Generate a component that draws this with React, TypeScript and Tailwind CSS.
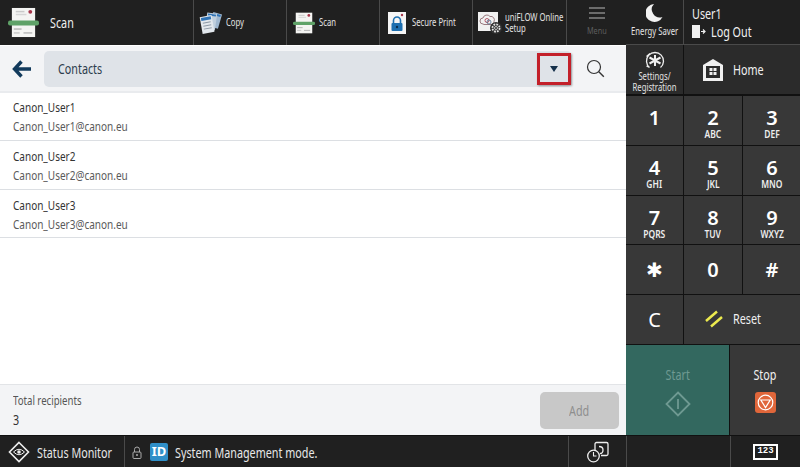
import React from 'react';

// the device font is a narrow one, none is installed, so squeeze Noto Sans
const T = ({ children, center, className = '' }: { children: React.ReactNode; center?: boolean; className?: string }) => (
  <span className={`inline-block whitespace-nowrap scale-x-[0.77] ${center ? 'origin-center text-center' : 'origin-left'} ${className}`}>
    {children}
  </span>
);

const ScanIcon = ({ size }: { size: number }) => (
  <svg width={size} height={size} viewBox="0 0 32 32" className="shrink-0">
    <rect x="4" y="1" width="24" height="30" fill="#f4f4f2" />
    <rect x="8" y="4" width="9" height="1.500" fill="#c9c9c9" />
    <rect x="8" y="7" width="11" height="1.500" fill="#d6d6d6" />
    <circle cx="23" cy="5" r="2" fill="#a5354a" />
    <rect x="0" y="14" width="32" height="5" rx="2" fill="#5fa268" />
    <rect x="6" y="22" width="8" height="1.500" fill="#b8b8b8" />
    <rect x="16" y="26" width="9" height="1.500" fill="#b8b8b8" />
    <rect x="6" y="26" width="6" height="1.500" fill="#c9c9c9" />
  </svg>
);

const CopyIcon = () => (
  <svg width="24" height="24" viewBox="0 0 24 24">
    <g transform="rotate(16 17 10)">
      <rect x="12" y="2" width="9" height="15" fill="#9fb7cf" />
      <rect x="13" y="3" width="7" height="2" fill="#2f73b5" />
    </g>
    <g transform="rotate(8 12 11)">
      <rect x="7" y="2" width="10" height="17" fill="#c0cfdd" />
      <rect x="8" y="3" width="8" height="2" fill="#2f73b5" />
    </g>
    <g transform="rotate(-10 8 13)">
      <rect x="2" y="5" width="12" height="17" fill="#e3e8ed" />
      <rect x="3" y="6" width="10" height="3" fill="#2f73b5" />
      <rect x="4" y="11" width="8" height="1" fill="#8d99a5" />
      <rect x="4" y="14" width="8" height="1" fill="#8d99a5" />
      <rect x="4" y="17" width="8" height="1" fill="#8d99a5" />
    </g>
  </svg>
);

const SecureIcon = () => (
  <svg width="18" height="22" viewBox="0 0 18 22">
    <rect width="18" height="22" fill="#f5f5f5" />
    <circle cx="14" cy="3" r="1.200" fill="#a5354a" />
    <path d="M5.500 11V8.500a3.500 3.500 0 0 1 7 0V11" fill="none" stroke="#1d6fb0" strokeWidth="1.600" />
    <rect x="3.500" y="11" width="11" height="8" rx="1" fill="#1d6fb0" />
    <circle cx="9" cy="15" r="1.200" fill="#0c2c4c" />
  </svg>
);

const UniflowIcon = () => (
  <svg width="24" height="24" viewBox="0 0 24 24">
    <rect x="0" y="1" width="20" height="19" fill="#f1f1f1" />
    <path d="M5 13a3 3 0 0 1 0-6 4 4 0 0 1 7-1.500a3.500 3.500 0 0 1 4 5 2.500 2.500 0 0 1-2 3H6z" fill="none" stroke="#9a7a80" strokeWidth="1" />
    <circle cx="9" cy="9.500" r="2" fill="none" stroke="#a5354a" strokeWidth="0.800" />
    <circle cx="11" cy="11" r="2" fill="none" stroke="#4a6a8a" strokeWidth="0.800" />
    <circle cx="18" cy="17" r="6" fill="#303030" />
    <circle cx="18" cy="17" r="3.600" fill="none" stroke="#e2e2e2" strokeWidth="1.800" strokeDasharray="1.800 1" />
    <circle cx="18" cy="17" r="1.500" fill="none" stroke="#e2e2e2" strokeWidth="0.800" />
  </svg>
);

const TopItem = ({ icon, label, width }: { icon: React.ReactNode; label: React.ReactNode; width: string }) => (
  <div className={`${width} flex h-full items-center border-r border-[#4a4a4a] pl-[1px]`}>
    <div className="flex w-[31px] shrink-0 items-center justify-center">{icon}</div>
    <T className="text-[10px] leading-[11px] text-[#e4e4e4]">{label}</T>
  </div>
);

const Contact = ({ name, offset = '' }: { name: string; offset?: string }) => (
  <div className={`flex h-[48.340px] flex-col justify-center border-b border-[#dcdfe3] pl-[13px] ${offset}`}>
    <div className="h-[19px] text-[13px] leading-[19px] text-[#333]"><T>{name}</T></div>
    <div className="h-[18px] text-[13px] leading-[18px] text-[#5a5a5a]"><T>{name}@canon.eu</T></div>
  </div>
);

const Key = ({ digit, letters, className = '' }: { digit: React.ReactNode; letters?: string; className?: string }) => (
  <div className={`flex flex-col items-center bg-[#383838] text-white ${letters ? 'justify-start pt-[11px]' : 'justify-center'} ${className}`}>
    <div className="h-[21px] text-[20px] font-semibold leading-[21px]">{digit}</div>
    {letters && <T center className="text-[11px] font-semibold leading-[11px] text-[#eee]">{letters}</T>}
  </div>
);

export default function App() {
  return (
    <div className="flex h-[467px] w-[800px] flex-col overflow-hidden bg-[#111] font-['Noto_Sans',sans-serif]">
      <div className="flex min-h-0 flex-1">
        {/* left side */}
        <div className="flex w-[626px] flex-col">
          <div className="flex h-[45px] bg-[#202020]">
            <div className="flex w-[194px] items-center border-r border-[#4a4a4a] pl-[8px]">
              <ScanIcon size={31} />
              <T className="ml-[11px] text-[14px] text-[#f0f0f0]">Scan</T>
            </div>
            <TopItem width="w-[93px]" icon={<CopyIcon />} label="Copy" />
            <TopItem width="w-[93px]" icon={<ScanIcon size={22} />} label="Scan" />
            <TopItem width="w-[93px]" icon={<SecureIcon />} label="Secure Print" />
            <TopItem width="w-[94px]" icon={<UniflowIcon />} label={<>uniFLOW Online<br />Setup</>} />
            <div className="flex flex-1 flex-col items-center pt-[7px] text-[#5e5e5e]">
              <div className="flex w-[16px] flex-col gap-[3px]">
                <div className="h-[2px] bg-[#6c6c6c]" />
                <div className="h-[2px] bg-[#6c6c6c]" />
                <div className="h-[2px] bg-[#6c6c6c]" />
              </div>
              <T center className="mt-[6px] text-[9.500px] leading-[11px]">Menu</T>
            </div>
          </div>

          <div className="flex h-[48px] items-center border-b-[2px] border-t border-b-[#e9ebee] border-t-[#fff] bg-[#f3f4f6]">
            <div className="flex w-[44px] justify-center">
              <svg width="20" height="18" viewBox="0 0 20 18">
                <path d="M9.500 1.500 2.500 9l7 7.500M3 9h16" fill="none" stroke="#123a5c" strokeWidth="3.400" />
              </svg>
            </div>
            <div className="flex h-[36px] w-[528px] items-center rounded-[5px] bg-[#dfe3e8] pl-[14px]">
              <T className="text-[14px] text-[#2c3c4c]">Contacts</T>
              <div className="ml-auto mr-[1px] flex h-[32px] w-[34px] items-center justify-center border-[3px] border-[#c3202a] shadow-[1px_1px_2px_rgba(0,0,0,0.35)]">
                <svg width="8" height="6" viewBox="0 0 8 6">
                  <path d="M0 0h8L4 6z" fill="#15304a" />
                </svg>
              </div>
            </div>
            <div className="flex flex-1 justify-center pr-[8px]">
              <svg width="19" height="19" viewBox="0 0 19 19">
                <circle cx="8" cy="8" r="6.500" fill="none" stroke="#333" strokeWidth="1.200" />
                <path d="m12.800 12.800 5 5" stroke="#333" strokeWidth="1.400" />
              </svg>
            </div>
          </div>

          <div className="flex-1 bg-white">
            <Contact name="Canon_User1" />
            <Contact name="Canon_User2" offset="pt-[1px]" />
            <Contact name="Canon_User3" offset="pt-[2px]" />
          </div>

          <div className="flex h-[51px] items-center justify-between border-t border-[#e2e4e7] bg-[#f3f4f6] pl-[13px] pr-[7px]">
            <div className="pt-[2px] text-[#555]">
              <div className="h-[16px] text-[12.500px] leading-[16px]"><T>Total recipients</T></div>
              <div className="mt-[2px] text-[14px] leading-[18px] text-[#333]"><T>3</T></div>
            </div>
            <div className="flex h-[37px] w-[79px] items-center justify-center rounded-[5px] bg-[#c8c8c8] text-[14px] text-[#8e8e8e]">
              <T center>Add</T>
            </div>
          </div>
        </div>

        {/* right panel */}
        <div className="flex w-[174px] flex-col bg-[#111]">
          <div className="flex h-[45px] gap-px border-b border-[#4a4a4a] bg-[#4a4a4a]">
            <div className="flex w-[57px] flex-col items-center bg-[#202020] pt-[3px]">
              <svg width="17" height="20" viewBox="0 0 17 20">
                <path d="M8 1a9 9 0 1 0 8.500 13A8 8 0 0 1 8 1z" fill="#f2f2f2" />
              </svg>
              <T center className="mt-[3px] text-[10px] leading-[11px] text-[#e4e4e4]">Energy Saver</T>
            </div>
            <div className="flex-1 bg-[#202020] pl-[8px] pt-[5px] text-[14px] text-[#f0f0f0]">
              <div className="h-[17px] leading-[17px]"><T>User1</T></div>
              <div className="mt-[1px] flex items-center gap-[5px] leading-[17px]">
                <svg width="14" height="13" viewBox="0 0 14 13" className="shrink-0">
                  <path d="M0 0h8v13H0z" fill="#f0f0f0" />
                  <path d="M9 6.500h3.500M11 4.500l2 2-2 2" fill="none" stroke="#f0f0f0" strokeWidth="1.200" />
                </svg>
                <T>Log Out</T>
              </div>
            </div>
          </div>
          <div className="flex h-[51px] gap-px border-b-[2px] border-[#111] bg-[#111]">
            <div className="flex w-[57px] flex-col items-center bg-[#2b2b2b] pt-[6px]">
              <svg width="24" height="19" viewBox="0 0 24 19">
                <path d="M6.500 16.500a8.500 8.500 0 1 1 11 0M6.500 16.500 3.500 15M3.500 5.500 7 2.500" fill="none" stroke="#f0f0f0" strokeWidth="1.300" />
                <path d="M12 4v11M6.500 6.500l11 6M17.500 6.500l-11 6" stroke="#f0f0f0" strokeWidth="2" />
              </svg>
              <T center className="mt-[1px] text-[10px] leading-[11px] text-[#e4e4e4]">Settings/<br />Registration</T>
            </div>
            <div className="flex flex-1 items-center gap-[10px] bg-[#2b2b2b] pl-[19px] text-[14px] text-[#f0f0f0]">
              <svg width="20" height="22" viewBox="0 0 20 22" className="shrink-0">
                <path d="M0 6 10 0l10 6v16H0z" fill="#f0f0f0" />
                <rect x="3" y="7" width="14" height="12" fill="#2b2b2b" />
                <path d="M6.500 9h3v3h-3zM10.500 9h3v3h-3zM6.500 13h3v3h-3zM10.500 13h3v3h-3z" fill="#f0f0f0" />
              </svg>
              <T>Home</T>
            </div>
          </div>

          <div className="grid h-[248px] grid-cols-[57px_58px_58px] grid-rows-5 gap-px">
            <Key digit="1" className="pb-[6px]" />
            <Key digit="2" letters="ABC" />
            <Key digit="3" letters="DEF" />
            <Key digit="4" letters="GHI" />
            <Key digit="5" letters="JKL" />
            <Key digit="6" letters="MNO" />
            <Key digit="7" letters="PQRS" />
            <Key digit="8" letters="TUV" />
            <Key digit="9" letters="WXYZ" />
            <Key digit={<span className="font-['DejaVu_Sans',sans-serif] font-normal">✱</span>} />
            <Key digit="0" />
            <Key digit="#" />
            <Key digit={<span className="font-normal">C</span>} />
            <div className="col-span-2 flex items-center gap-[10px] bg-[#383838] pb-[2px] pl-[21px] text-[14px] text-[#f0f0f0]">
              <svg width="18" height="18" viewBox="0 0 18 18" className="shrink-0">
                <path d="M1 11 12 1.500M6 16.500 17 7" stroke="#ecea4e" strokeWidth="2.500" />
              </svg>
              <T>Reset</T>
            </div>
          </div>

          <div className="flex flex-1 gap-px pt-px">
            <div className="flex w-[103px] flex-col items-center bg-[#33685f] pt-[20px] text-[14px] leading-[20px] text-[#6f9a92]">
              <T center>Start</T>
              <svg className="mt-[6px]" width="26" height="26" viewBox="0 0 26 26">
                <path d="M13 1.500 24.500 13 13 24.500 1.500 13z" fill="none" stroke="#6f9a92" strokeWidth="1.800" />
                <path d="M13 8v10" stroke="#6f9a92" strokeWidth="1.800" />
              </svg>
            </div>
            <div className="flex flex-1 flex-col items-center bg-[#383838] pt-[20px] text-[14px] leading-[20px] text-[#f0f0f0]">
              <T center>Stop</T>
              <div className="mt-[7px] flex h-[21px] w-[21px] items-center justify-center rounded-[3px] bg-[#e0663a]">
                <svg width="17" height="17" viewBox="0 0 17 17">
                  <circle cx="8.500" cy="8.500" r="7.300" fill="none" stroke="#fff" strokeWidth="1.200" />
                  <path d="M3.800 6h9.400l-4.700 7.500z" fill="none" stroke="#fff" strokeWidth="1.200" />
                </svg>
              </div>
            </div>
          </div>
        </div>
      </div>

      {/* status bar */}
      <div className="mt-px flex h-[31px] bg-[#202020] text-[14px] text-[#e8e8e8]">
        <div className="flex w-[125px] shrink-0 items-center overflow-hidden border-r border-[#4a4a4a] pl-[8px] pt-[1px]">
          <svg width="22" height="22" viewBox="0 0 22 22" className="shrink-0">
            <path d="M11 1.500 20.500 11 11 20.500 1.500 11z" fill="none" stroke="#eee" strokeWidth="1.600" />
            <path d="M5.500 11Q11 5.500 16.500 11 11 16.500 5.500 11z" fill="none" stroke="#eee" strokeWidth="1" />
            <circle cx="11" cy="11" r="1.800" fill="#eee" />
          </svg>
          <T className="ml-[7px]">Status Monitor</T>
        </div>
        <div className="flex w-[444px] shrink-0 items-center border-r border-[#4a4a4a] pl-[7px] pt-[1px]">
          <svg width="10" height="13" viewBox="0 0 10 13" className="shrink-0">
            <path d="M2.500 6V3.500a2.500 2.500 0 0 1 5 0V6" fill="none" stroke="#aaa" strokeWidth="1" />
            <rect x="1" y="6" width="8" height="6.500" rx="1" fill="none" stroke="#aaa" />
            <circle cx="5" cy="9" r="1" fill="#aaa" />
          </svg>
          <div className="ml-[8px] flex h-[18px] w-[18px] items-center justify-center rounded-[2px] bg-[#2f8fc8] text-[13px] font-bold text-white">ID</div>
          <T className="ml-[7px]">System Management mode.</T>
        </div>
        <div className="flex w-[57px] shrink-0 items-center justify-center">
          <svg width="24" height="22" viewBox="0 0 24 22">
            <path d="M9 9V3a1.500 1.500 0 0 1 1.500-1.500h10A1.500 1.500 0 0 1 22 3v10a1.500 1.500 0 0 1-1.500 1.500H15" fill="none" stroke="#eee" strokeWidth="1.300" />
            <circle cx="7.500" cy="15" r="5.800" fill="none" stroke="#eee" strokeWidth="1.300" />
            <path d="M13 5.500q4 0 4 3.500t-3 3.500" fill="none" stroke="#eee" strokeWidth="1.300" />
            <path d="M7.500 11v4h3" fill="none" stroke="#eee" strokeWidth="1.100" />
          </svg>
        </div>
        <div className="w-[104px] shrink-0 border-l border-[#4a4a4a]" />
        <div className="flex flex-1 items-center justify-center border-l border-[#4a4a4a]">
          <div className="flex h-[16px] w-[25px] items-center justify-center border-2 border-white bg-[#202020] font-['Liberation_Mono',monospace] text-[9px] font-bold leading-none text-white">123</div>
        </div>
      </div>
    </div>
  );
}
